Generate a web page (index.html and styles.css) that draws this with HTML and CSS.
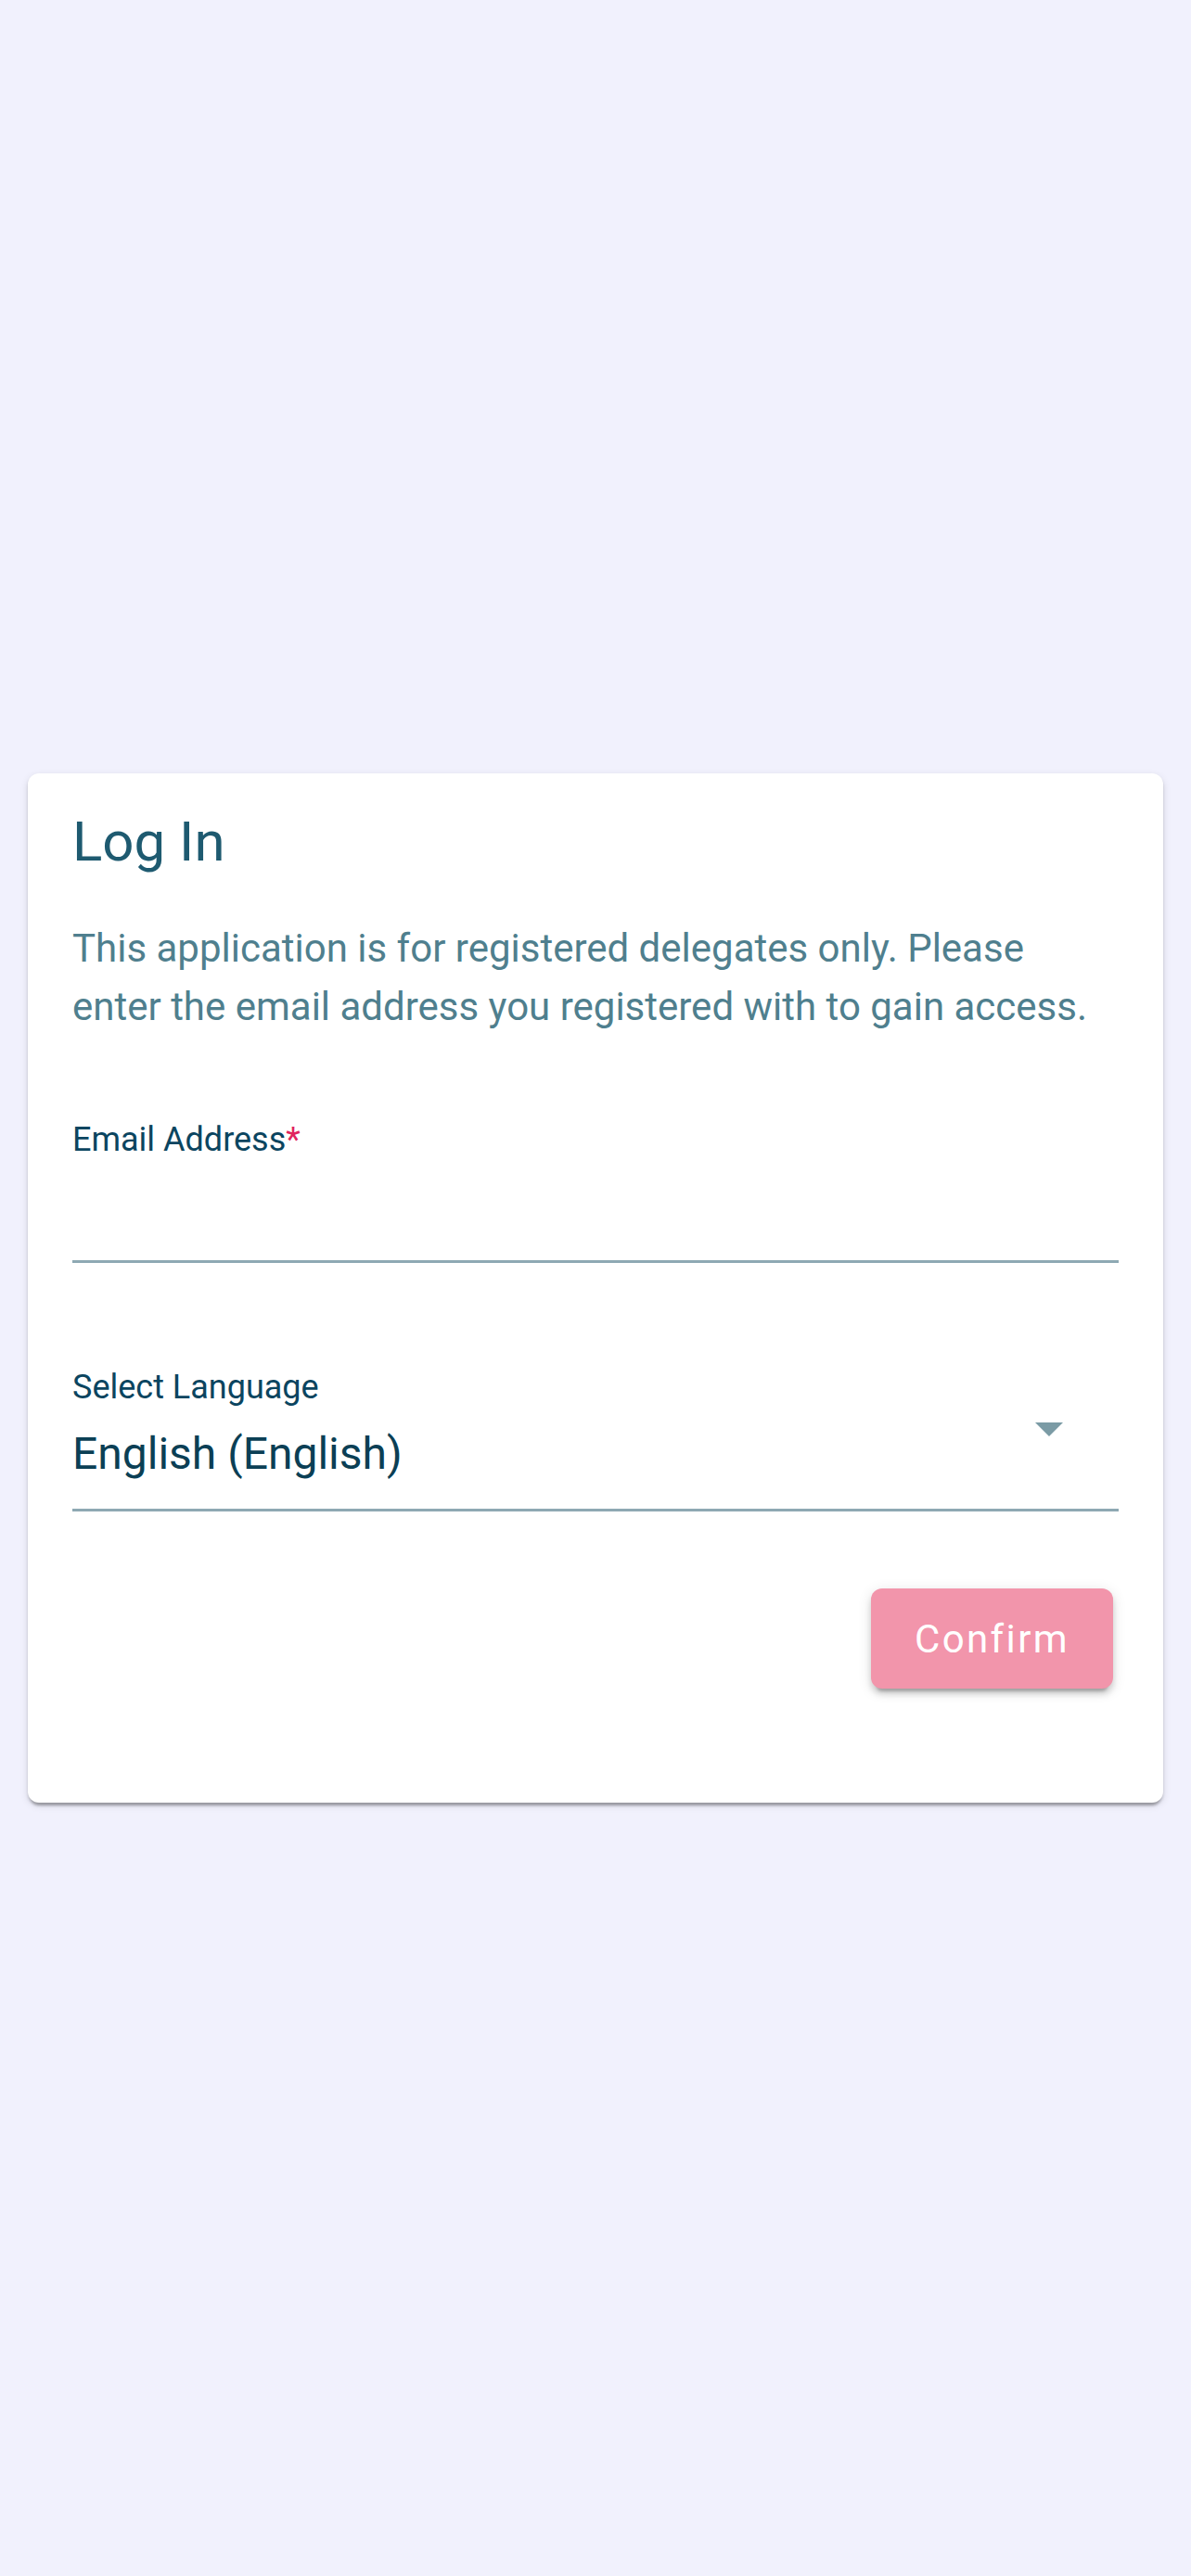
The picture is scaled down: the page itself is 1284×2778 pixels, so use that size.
FILE: index.html
```html
<!DOCTYPE html>
<html lang="en">
<head>
<meta charset="utf-8">
<title>Log In</title>
<link rel="stylesheet" href="styles.css">
</head>
<body>
<main class="page">
  <section class="card">
    <h1 class="title">Log In</h1>
    <p class="intro">This application is for registered delegates only. Please enter the email address you registered with to gain access.</p>
    <div class="field email-field">
      <label class="field-label" for="email">Email Address<span class="req">*</span></label>
      <input class="email-input" id="email" type="email">
    </div>
    <div class="field select-field">
      <div class="select-text">
        <div class="field-label">Select Language</div>
        <div class="select-value">English (English)</div>
      </div>
      <span class="select-arrow"></span>
    </div>
    <div class="actions">
      <button class="confirm" type="button">Confirm</button>
    </div>
  </section>
</main>
</body>
</html>
```

FILE: styles.css
```css
html, body {
  margin: 0;
  padding: 0;
}
body {
  background: #f1f1fd;
  font-family: Roboto, "Liberation Sans", Arial, sans-serif;
}
.page {
  min-height: 2778px;
  display: flex;
  align-items: center;
  padding: 0 30px;
  box-sizing: border-box;
}
.card {
  flex: 1;
  height: 1110px;
  box-sizing: border-box;
  background: #ffffff;
  border-radius: 12px;
  box-shadow: 0 6px 3px -3px rgba(0,0,0,.2), 0 3px 3px 0 rgba(0,0,0,.14), 0 3px 9px 0 rgba(0,0,0,.12);
  padding: 38px 48px 0 48px;
  display: flex;
  flex-direction: column;
}
.title {
  margin: 0;
  font-size: 60px;
  line-height: 72px;
  font-weight: 400;
  color: #1e5a70;
}
.intro {
  margin: 47px 0 0 0;
  font-size: 42px;
  line-height: 63px;
  color: #4f7f8e;
}
.field-label {
  display: block;
  font-size: 36px;
  line-height: 45px;
  color: #0b4560;
}
.req {
  color: #e0245e;
}
.email-field {
  margin-top: 90px;
}
.email-input {
  display: block;
  width: 100%;
  box-sizing: border-box;
  height: 110px;
  border: 0;
  border-bottom: 3px solid #8ea9b3;
  outline: none;
  background: transparent;
  font: inherit;
  font-size: 48px;
  padding: 0;
}
.select-field {
  margin-top: 112px;
  display: flex;
  align-items: center;
  border-bottom: 3px solid #8ea9b3;
  padding-bottom: 29px;
}
.select-text {
  flex: 1;
}
.select-value {
  margin-top: 19px;
  font-size: 48px;
  line-height: 60px;
  color: #0b3f55;
}
.select-arrow {
  width: 0;
  height: 0;
  border-left: 15px solid transparent;
  border-right: 15px solid transparent;
  border-top: 15px solid #7b9ba5;
  margin-right: 60px;
  margin-top: 10px;
}
.actions {
  display: flex;
  justify-content: flex-end;
  margin-top: 83px;
  padding-right: 6px;
}
.confirm {
  width: 261px;
  height: 108px;
  border: 0;
  border-radius: 12px;
  background: #f295ab;
  color: #ffffff;
  font-family: Roboto, "Liberation Sans", Arial, sans-serif;
  font-size: 42px;
  font-weight: 400;
  letter-spacing: 2.4px;
  box-shadow: 0 9px 3px -6px rgba(0,0,0,.2), 0 6px 6px 0 rgba(0,0,0,.14), 0 3px 15px 0 rgba(0,0,0,.12);
  padding: 0;
}
```
